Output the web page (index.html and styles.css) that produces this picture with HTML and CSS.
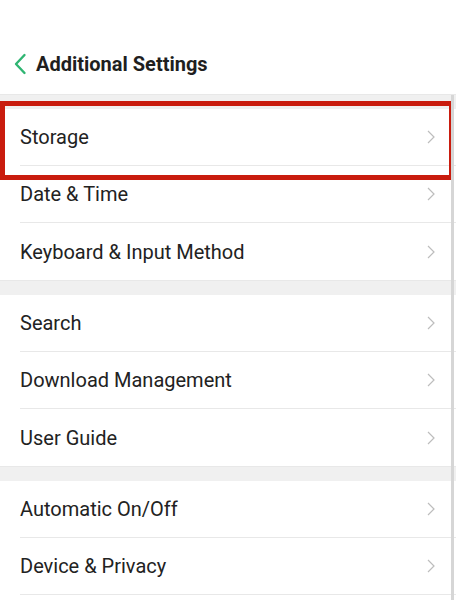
FILE: index.html
```html
<!DOCTYPE html>
<html>
<head>
<meta charset="utf-8">
<link rel="stylesheet" href="styles.css">
</head>
<body>
<div class="page">
  <header class="header">
    <svg class="back" width="14" height="22" viewBox="0 0 14 22"><path d="M11.5 2 L3 11 L11.5 20" fill="none" stroke="#2fb572" stroke-width="2.4" stroke-linecap="round" stroke-linejoin="round"/></svg>
    <h1 class="title">Additional Settings</h1>
  </header>

  <div class="gap"></div>
  <div class="group">
    <div class="row highlighted">
      <div class="row-inner"><span>Storage</span><svg class="chev" width="8" height="14" viewBox="0 0 8 14"><path d="M1 1 L7 7 L1 13" fill="none" stroke="#bdbdbd" stroke-width="1.2"/></svg></div>
      <div class="highlight"></div>
    </div>
    <div class="row">
      <div class="row-inner"><span>Date &amp; Time</span><svg class="chev" width="8" height="14" viewBox="0 0 8 14"><path d="M1 1 L7 7 L1 13" fill="none" stroke="#bdbdbd" stroke-width="1.2"/></svg></div>
    </div>
    <div class="row last">
      <div class="row-inner"><span>Keyboard &amp; Input Method</span><svg class="chev" width="8" height="14" viewBox="0 0 8 14"><path d="M1 1 L7 7 L1 13" fill="none" stroke="#bdbdbd" stroke-width="1.2"/></svg></div>
    </div>
  </div>

  <div class="gap"></div>
  <div class="group">
    <div class="row">
      <div class="row-inner"><span>Search</span><svg class="chev" width="8" height="14" viewBox="0 0 8 14"><path d="M1 1 L7 7 L1 13" fill="none" stroke="#bdbdbd" stroke-width="1.2"/></svg></div>
    </div>
    <div class="row">
      <div class="row-inner"><span>Download Management</span><svg class="chev" width="8" height="14" viewBox="0 0 8 14"><path d="M1 1 L7 7 L1 13" fill="none" stroke="#bdbdbd" stroke-width="1.2"/></svg></div>
    </div>
    <div class="row last">
      <div class="row-inner"><span>User Guide</span><svg class="chev" width="8" height="14" viewBox="0 0 8 14"><path d="M1 1 L7 7 L1 13" fill="none" stroke="#bdbdbd" stroke-width="1.2"/></svg></div>
    </div>
  </div>

  <div class="gap"></div>
  <div class="group">
    <div class="row">
      <div class="row-inner"><span>Automatic On/Off</span><svg class="chev" width="8" height="14" viewBox="0 0 8 14"><path d="M1 1 L7 7 L1 13" fill="none" stroke="#bdbdbd" stroke-width="1.2"/></svg></div>
    </div>
    <div class="row">
      <div class="row-inner"><span>Device &amp; Privacy</span><svg class="chev" width="8" height="14" viewBox="0 0 8 14"><path d="M1 1 L7 7 L1 13" fill="none" stroke="#bdbdbd" stroke-width="1.2"/></svg></div>
    </div>
  </div>

  <div class="scrollbar"></div>
</div>
</body>
</html>
```

FILE: styles.css
```css
html, body {
  margin: 0;
  padding: 0;
  background: #ffffff;
}
.page {
  position: relative;
  width: 456px;
  height: 600px;
  overflow: hidden;
  font-family: Roboto, "Noto Sans", "Liberation Sans", sans-serif;
  color: #1e1e1e;
}
.header {
  height: 60px;
  padding-top: 34px;
  display: flex;
  align-items: center;
  padding-left: 13px;
  gap: 9px;
}
.back {
  display: block;
}
.title {
  margin: 0;
  font-size: 20px;
  font-weight: 700;
  color: #1f1f1f;
  letter-spacing: 0;
}
.gap {
  height: 15px;
  background: #f0f0f0;
  border-top: 1px solid #e8e8e8;
  box-sizing: border-box;
}
.group {
  background: #fff;
}
.row {
  padding-left: 20px;
  position: relative;
}
.row-inner {
  height: 57px;
  box-sizing: border-box;
  border-bottom: 1px solid #e8e8e8;
  display: flex;
  align-items: center;
  justify-content: space-between;
  padding-right: 21px;
  font-size: 20px;
  color: #222;
}
.row.last .row-inner {
  border-bottom: none;
}
.chev {
  display: block;
}
.highlight {
  position: absolute;
  left: 0;
  top: -8px;
  width: 454px;
  height: 79px;
  box-sizing: border-box;
  border: 5px solid #c91c0e;
}
.scrollbar {
  position: absolute;
  right: 2px;
  top: 95px;
  width: 3px;
  height: 505px;
  background: #d6d6d6;
}
```
